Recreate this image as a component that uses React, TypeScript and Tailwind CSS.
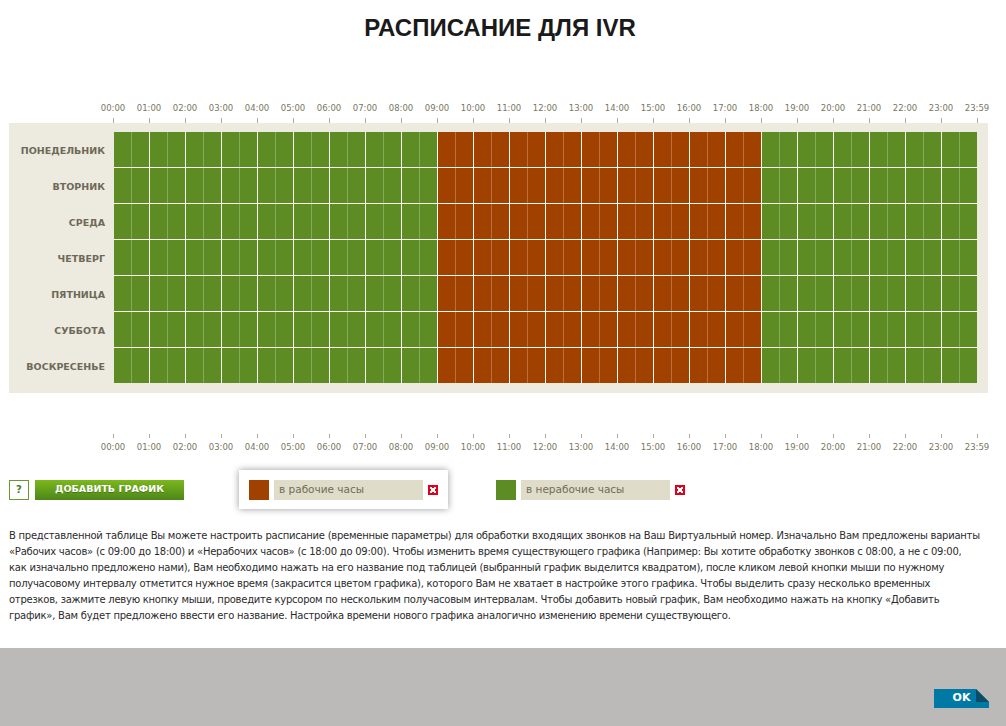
import React from 'react';

const days = ['ПОНЕДЕЛЬНИК', 'ВТОРНИК', 'СРЕДА', 'ЧЕТВЕРГ', 'ПЯТНИЦА', 'СУББОТА', 'ВОСКРЕСЕНЬЕ'];

const times = [
    ...Array.from({ length: 24 }, (_, h) => `${String(h).padStart(2, '0')}:00`),
    '23:59',
];

const description = [
    'В представленной таблице Вы можете настроить расписание (временные параметры) для обработки входящих звонков на Ваш Виртуальный номер. Изначально Вам предложены варианты',
    '«Рабочих часов» (с 09:00 до 18:00) и «Нерабочих часов» (с 18:00 до 09:00). Чтобы изменить время существующего графика (Например: Вы хотите обработку звонков с 08:00, а не с 09:00,',
    'как изначально предложено нами), Вам необходимо нажать на его название под таблицей (выбранный график выделится квадратом), после кликом левой кнопки мыши по нужному',
    'получасовому интервалу отметится нужное время (закрасится цветом графика), которого Вам не хватает в настройке этого графика. Чтобы выделить сразу несколько временных',
    'отрезков, зажмите левую кнопку мыши, проведите курсором по нескольким получасовым интервалам. Чтобы добавить новый график, Вам необходимо нажать на кнопку «Добавить',
    'график», Вам будет предложено ввести его название. Настройка времени нового графика аналогично изменению времени существующего.',
];

// working hours: 09:00 - 18:00 -> half-hour slots 18..35
const isWork = (slot: number) => slot >= 18 && slot < 36;

function TimeRow({ bottom }: { bottom?: boolean }) {
    return (
        <div className="flex ml-[95px]">
            {times.map((t) => (
                <div key={t} className="flex w-[36px] flex-col items-center">
                    {bottom && <div className="self-start ml-[18px] w-px h-[4px] bg-[#aeab9c]" />}
                    <div
                        className={`h-[12px] leading-[12px] text-[8.5px] text-[#7a7662] ${bottom ? 'mt-[3px]' : ''}`}
                    >
                        {t}
                    </div>
                    {!bottom && <div className="self-start ml-[18px] mt-[4px] w-px h-[5px] bg-[#aeab9c]" />}
                </div>
            ))}
        </div>
    );
}

function RemoveIcon() {
    return (
        <svg width="10" height="10" viewBox="0 0 10 10" className="shrink-0">
            <rect width="10" height="10" fill="#e0001b" />
            <path d="M2 2h2v1h2V2h2v2H7v2h1v2H6V7H4v1H2V6h1V4H2z" fill="#fff" />
        </svg>
    );
}

function ScheduleItem({ color, label, selected }: { color: string; label: string; selected?: boolean }) {
    return (
        <div
            className={`flex h-[39px] w-[209px] items-center px-[10px] ${selected ? 'bg-white shadow-[0_0_7px_rgba(0,0,0,0.4)]' : ''}`}
        >
            <div className={`h-[20px] w-[20px] shrink-0 ${color}`} />
            <div className="ml-[5px] flex h-[20px] w-[149px] items-center bg-[#dfddca] pl-[5px] text-[10.5px] text-[#6f6c59]">
                {label}
            </div>
            <div className="ml-[5px]">
                <RemoveIcon />
            </div>
        </div>
    );
}

export default function App() {
    return (
        <div className="flex h-[726px] w-[1006px] flex-col bg-white font-['DejaVu_Sans',sans-serif]">
            {/* Title */}
            <div className="flex h-[56px] items-center justify-center pr-[6px]">
                <h1 className="font-['Liberation_Sans',Arial,sans-serif] text-[24px] font-bold leading-none text-[#1a1a1a]">
                    РАСПИСАНИЕ ДЛЯ IVR
                </h1>
            </div>

            <div className="mt-[46px]">
                <TimeRow />
            </div>

            {/* Schedule grid */}
            <div className="ml-[9px] flex w-[979px] bg-[#edeae0] pt-[9px] pb-[10px]">
                <div className="flex w-[96px] flex-col gap-px">
                    {days.map((d) => (
                        <div
                            key={d}
                            className="flex h-[35px] items-center justify-end pt-[3px] text-[9.5px] font-bold text-[#6d6957]"
                        >
                            {d}
                        </div>
                    ))}
                </div>
                <div className="ml-[9px] flex flex-col gap-px bg-[#fbfaee]">
                    {days.map((d) => (
                        <div key={d} className="flex h-[35px]">
                            {Array.from({ length: 48 }, (_, i) => (
                                <div
                                    key={i}
                                    className={`h-full ${i === 47 ? 'w-[17px]' : 'w-[18px] border-r'} ${
                                        isWork(i) ? 'bg-[#a14100]' : 'bg-[#5e8c24]'
                                    } ${i % 2 === 1 ? 'border-[#fbfaee]' : 'border-white/25'}`}
                                />
                            ))}
                        </div>
                    ))}
                </div>
            </div>

            <div className="mt-[41px]">
                <TimeRow bottom />
            </div>

            {/* Controls */}
            <div className="mt-[17px] flex items-center pl-[9px]">
                <button className="flex h-[20px] w-[20px] items-center justify-center border border-[#6a9a2e] bg-white text-[10px] font-bold text-[#4e7b2c]">
                    ?
                </button>
                <button className="ml-[6px] flex h-[20px] w-[149px] items-center justify-center bg-gradient-to-b from-[#7cb81c] to-[#4c8618] text-[9.5px] font-bold text-white [text-shadow:0_1px_0_rgba(0,0,0,0.25)]">
                    ДОБАВИТЬ ГРАФИК
                </button>
                <div className="ml-[55px]">
                    <ScheduleItem color="bg-[#a14100]" label="в рабочие часы" selected />
                </div>
                <div className="ml-[38px]">
                    <ScheduleItem color="bg-[#5e8c24]" label="в нерабочие часы" />
                </div>
            </div>

            {/* Description */}
            <div className="mt-[19px] pl-[9px] text-[10px] leading-[16px] tracking-[-0.25px] text-[#2b2b2b]">
                {description.map((line, i) => (
                    <div key={i} className="whitespace-nowrap">
                        {line}
                    </div>
                ))}
            </div>

            {/* Footer */}
            <div className="mt-[24px] flex flex-1 justify-end bg-[#bbbab8] pt-[41px] pr-[17px]">
                <button className="relative flex h-[19px] w-[55px] items-center justify-center bg-[#0079a5] text-[11px] font-bold text-white">
                    OK
                    <svg width="13" height="13" viewBox="0 0 13 13" className="absolute right-0 top-0">
                        <polygon points="0,0 13,0 13,13" fill="#bbbab8" />
                        <polygon points="0,0 0,13 13,13" fill="#0c4c65" />
                    </svg>
                </button>
            </div>
        </div>
    );
}
